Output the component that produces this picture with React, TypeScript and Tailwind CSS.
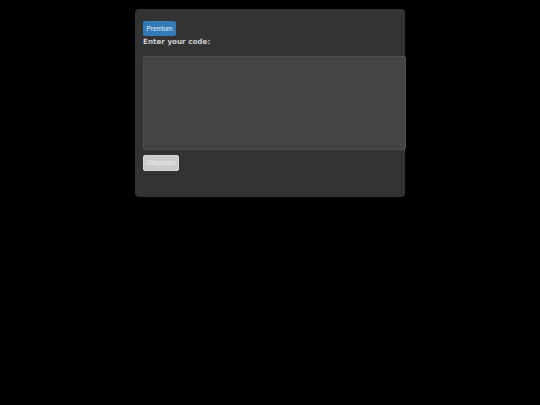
export default function App() {
  return (
    <div className="min-h-[405px] w-[540px] bg-black" style={{ fontFamily: '"DejaVu Sans", sans-serif' }}>
      <div className="h-[9px]" />
      <div className="mx-auto flex w-[270px] flex-col items-start rounded-[4px] bg-[#333333] pl-[8px] pt-[12px] pb-[26px]">
        <button className="h-[15px] w-[33px] rounded-[2px] bg-[#337ab7] font-['Liberation_Sans',sans-serif] text-[6.5px] font-normal leading-[15px] text-[#e8f0f8]">
          Premium
        </button>
        <div className="mt-[1px] text-[7.2px] font-bold leading-[10px] text-[#cccccc]">Enter your code:</div>
        <div className="mt-[9px] h-[94px] w-[263px] rounded-[2px] border border-[#4d4d4d] bg-[#444444]" />
        <button className="mt-[5px] h-[16px] w-[36px] rounded-[2px] border border-[#d8d8d8] bg-[#cccccc] font-['Liberation_Sans',sans-serif] text-[6.5px] leading-[14px] text-[#eeeeee]">
          Obfuscate
        </button>
      </div>
    </div>
  );
}
